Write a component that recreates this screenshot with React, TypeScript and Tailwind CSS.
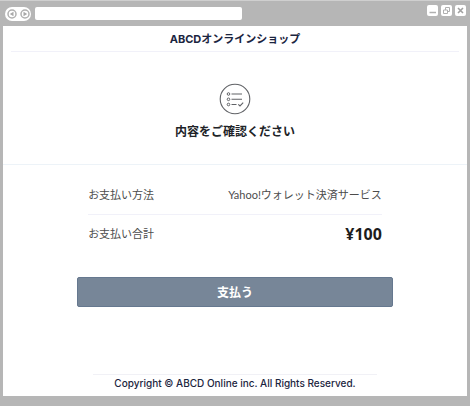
import { FormEvent, useState } from 'react';

const paymentRows = [
  { label: 'お支払い方法', value: 'Yahoo!ウォレット決済サービス', isTotal: false },
  { label: 'お支払い合計', value: '¥100', isTotal: true }
];

function BrowserBar() {
  const [address, setAddress] = useState('');

  return (
    <header className="flex h-[26px] items-center gap-1 border-t border-[#cfcfcf] bg-[#b6b6b6] pr-1 pl-[5px]">
      <div className="flex h-[14px] w-[26px] items-center justify-around rounded-full bg-white">
        <button type="button" aria-label="戻る">
          <svg viewBox="0 0 10 10" className="size-[10px]" fill="none">
            <circle cx="5" cy="5" r="4" stroke="#b0b0b0" strokeWidth="1.5" />
            <path d="M6.5 2.8v4.4L2.8 5z" fill="#a8a8a8" />
          </svg>
        </button>
        <button type="button" aria-label="進む">
          <svg viewBox="0 0 10 10" className="size-[10px]" fill="none">
            <circle cx="5" cy="5" r="4" stroke="#b0b0b0" strokeWidth="1.5" />
            <path d="M3.5 2.8v4.4L7.2 5z" fill="#a8a8a8" />
          </svg>
        </button>
      </div>
      <input
        aria-label="アドレス"
        value={address}
        onChange={(event) => setAddress(event.currentTarget.value)}
        className="h-[13px] w-[45%] rounded-xs bg-white px-1 text-[10px] outline-none"
      />
      <div className="ml-auto flex gap-[3px] pb-[6px]">
        <button type="button" aria-label="最小化" className="size-[11px] rounded-xs bg-white">
          <svg viewBox="0 0 11 11" className="size-[11px]" fill="none" stroke="#b0b0b0">
            <path d="M2.5 7.5h6.5" strokeWidth="1.5" />
          </svg>
        </button>
        <button type="button" aria-label="最大化" className="size-[11px] rounded-xs bg-white">
          <svg viewBox="0 0 11 11" className="size-[11px]" fill="none" stroke="#b0b0b0">
            <path d="M4.5 5v-2.5h4v4H7M2.5 5h4v3.5h-4z" />
          </svg>
        </button>
        <button type="button" aria-label="閉じる" className="size-[11px] rounded-xs bg-white">
          <svg viewBox="0 0 11 11" className="size-[11px]" fill="none" stroke="#a0a0a0">
            <path d="M3 3l5 5M8 3L3 8" strokeWidth="1.6" />
          </svg>
        </button>
      </div>
    </header>
  );
}

function ChecklistIcon() {
  return (
    <svg viewBox="0 0 32 32" className="size-8" fill="none" stroke="#606266" aria-hidden="true">
      <circle cx="16" cy="16" r="14.8" strokeWidth="1.1" />
      <circle cx="9.5" cy="11" r="1.3" />
      <circle cx="9.5" cy="16.3" r="1.3" />
      <circle cx="9.5" cy="21.5" r="1.3" />
      <path d="M12.5 11h10.5M12.5 16.3h10.5M12.5 21.5h5M19.3 21.3l1.7 1.7 3.2-3.4" strokeWidth="1.1" />
    </svg>
  );
}

export default function PaymentConfirmPage() {
  const [isSubmitting, setIsSubmitting] = useState(false);

  function handleSubmit(event: FormEvent<HTMLFormElement>) {
    event.preventDefault();
    setIsSubmitting(true);
  }

  return (
    <div className="flex min-h-screen flex-col bg-[#b6b6b6] font-['Noto_Sans_CJK_JP',sans-serif]">
      <BrowserBar />

      <div className="mx-[3px] mb-[10px] flex flex-1 flex-col bg-white">
        <h1 className="mx-2 border-b border-[#f1f1f9] pt-[5px] pb-1 text-center font-['Inter','Noto_Sans_CJK_JP',sans-serif] text-[11px] leading-4 font-bold text-[#1b2540]">
          ABCDオンラインショップ
        </h1>

        <main>
          <section className="flex flex-col items-center gap-2 border-b border-[#edf3f8] pt-[31px] pb-[25px]">
            <ChecklistIcon />
            <h2 className="text-[12px] leading-4 font-bold text-[#202327]">内容をご確認ください</h2>
          </section>

          <form onSubmit={handleSubmit} className="px-4 pt-3 sm:px-8">
            <dl className="mx-auto w-[68%] divide-y divide-[#f1f1f9] font-['Lato','Noto_Sans_CJK_JP',sans-serif] text-[11px] text-[#4c4c4c]">
              {paymentRows.map((row) => (
                <div key={row.label} className="flex h-[38px] items-center justify-between">
                  <dt>{row.label}</dt>
                  <dd className={row.isTotal ? "font-['Open_Sans','Noto_Sans_CJK_JP',sans-serif] text-[16px] font-bold text-[#1c1c1c]" : ''}>
                    {row.value}
                  </dd>
                </div>
              ))}
            </dl>
            <button
              disabled={isSubmitting}
              className="mx-auto mt-6 block h-[30px] w-[73%] rounded-xs border border-[#66788f] bg-[#778698] text-[12px] font-bold text-white disabled:opacity-70"
            >
              支払う
            </button>
          </form>
        </main>

        <footer className="mx-auto mt-auto w-[61%] border-t border-[#f1f1f6] pb-[5px] text-center font-['Inter',sans-serif] text-[10px] leading-4 font-medium whitespace-nowrap text-[#1b2540]">
          Copyright © ABCD Online inc. All Rights Reserved.
        </footer>
      </div>
    </div>
  );
}
